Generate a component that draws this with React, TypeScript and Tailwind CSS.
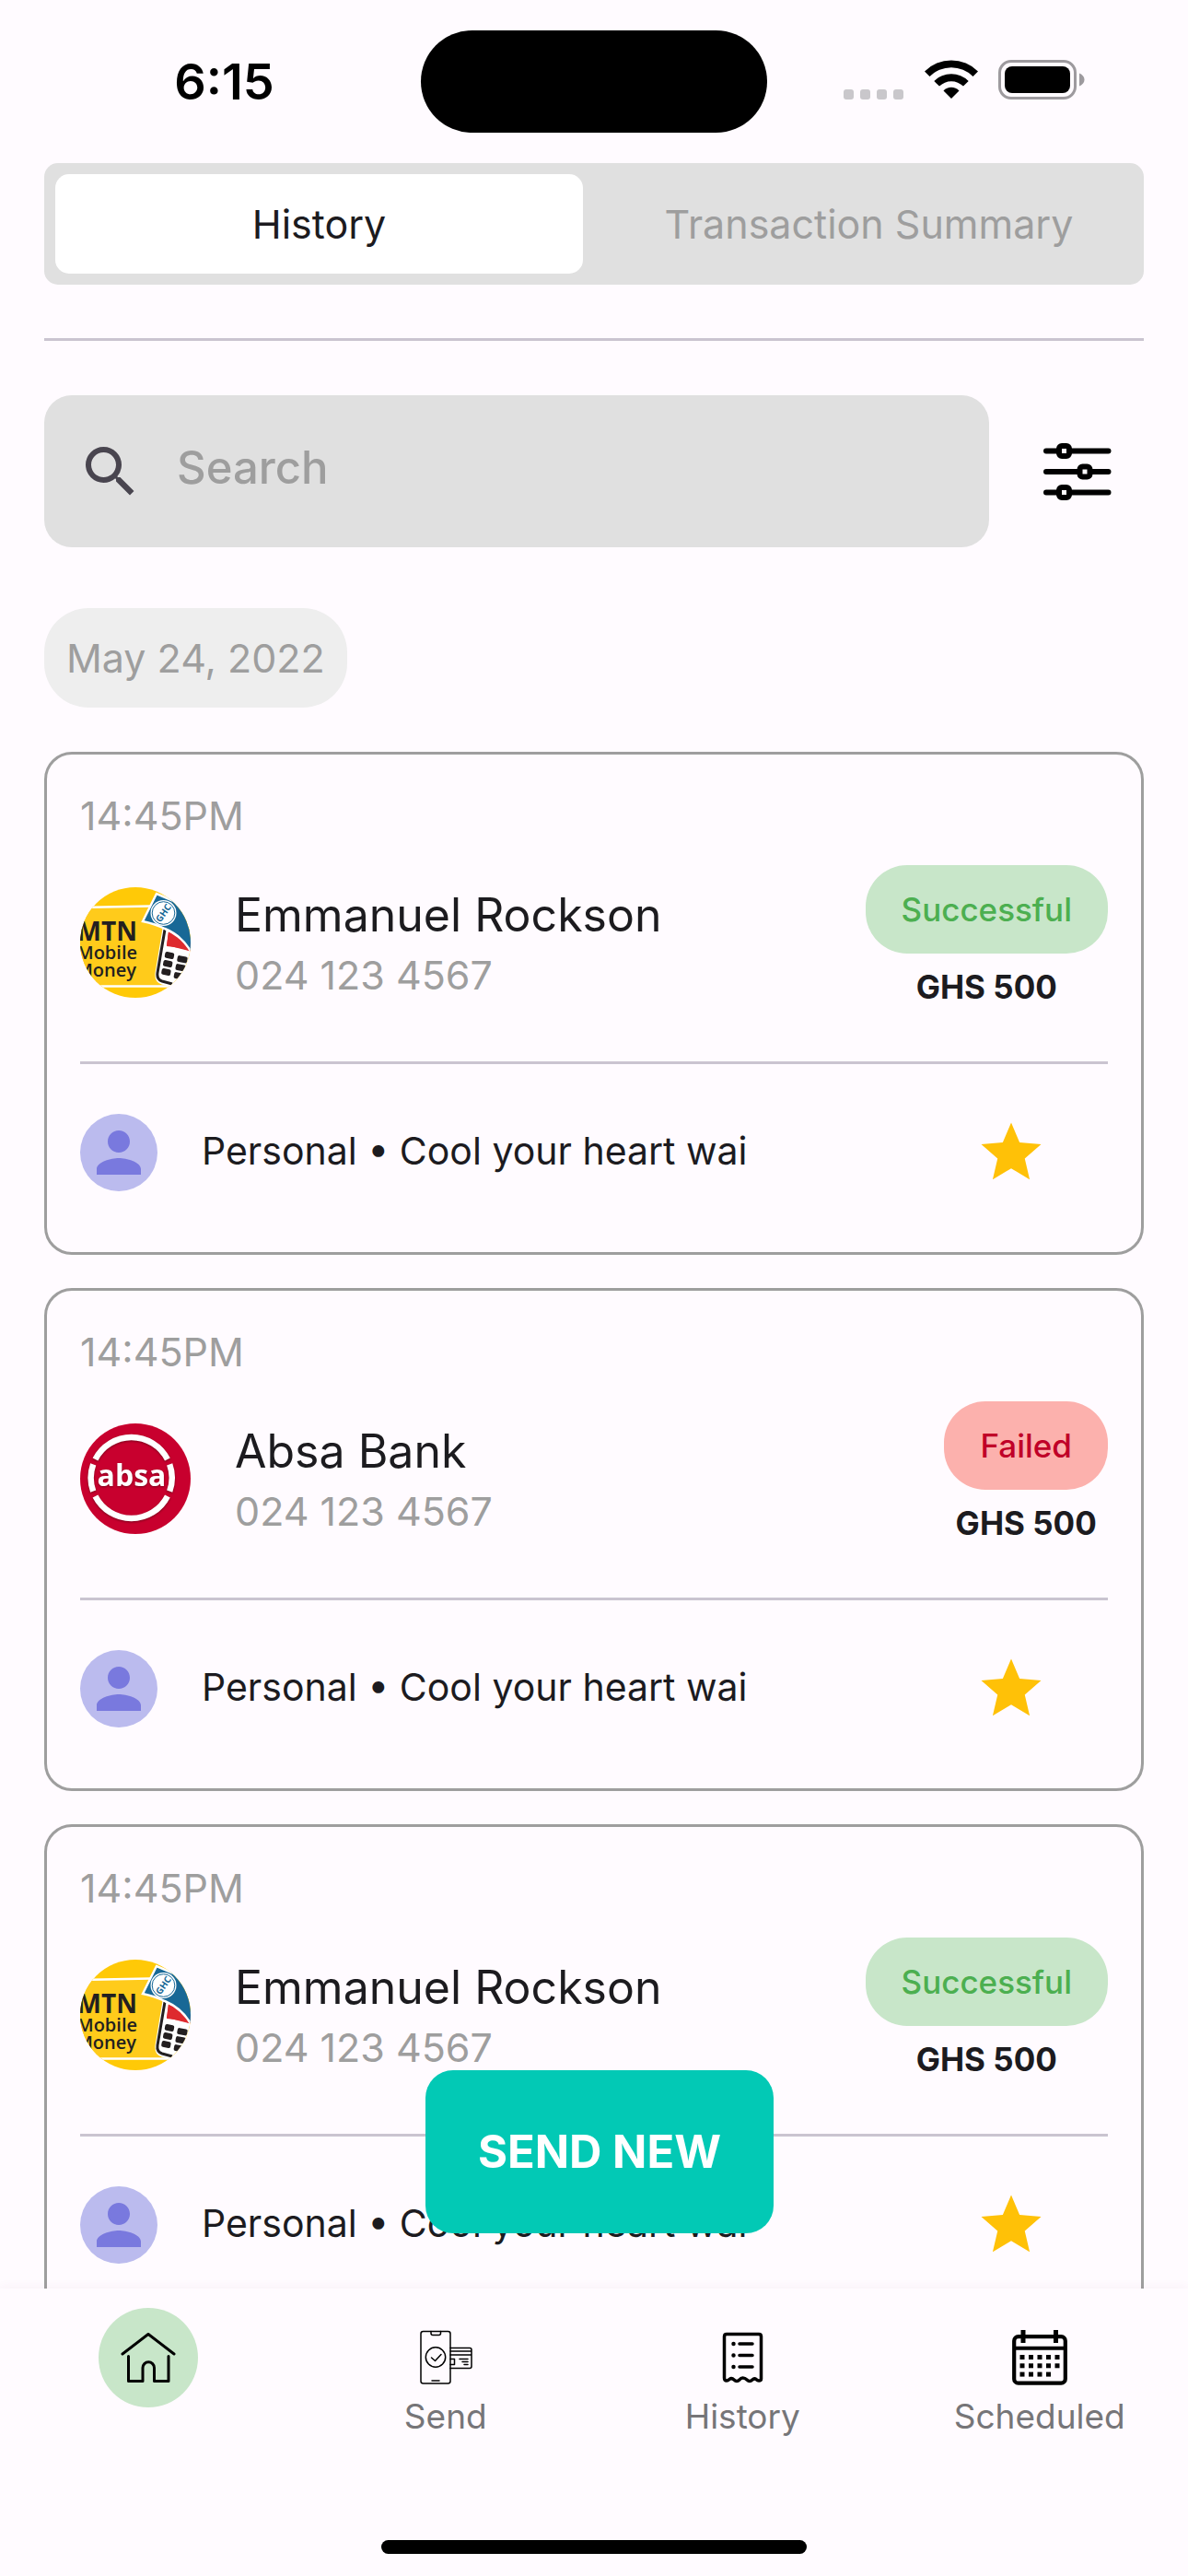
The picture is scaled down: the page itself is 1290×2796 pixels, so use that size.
import { useState } from "react";
import { MdPerson, MdSearch, MdStar } from "react-icons/md";

type Status = "Successful" | "Failed";
type Logo = "mtn" | "absa";

interface Transaction {
  id: number;
  time: string;
  name: string;
  phone: string;
  amount: string;
  status: Status;
  logo: Logo;
  note: string;
}

const transactions: Transaction[] = [
  { id: 1, time: "14:45PM", name: "Emmanuel Rockson", phone: "024 123 4567", amount: "GHS 500", status: "Successful", logo: "mtn", note: "Personal • Cool your heart wai" },
  { id: 2, time: "14:45PM", name: "Absa Bank", phone: "024 123 4567", amount: "GHS 500", status: "Failed", logo: "absa", note: "Personal • Cool your heart wai" },
  { id: 3, time: "14:45PM", name: "Emmanuel Rockson", phone: "024 123 4567", amount: "GHS 500", status: "Successful", logo: "mtn", note: "Personal • Cool your heart wai" },
];

function StatusBar() {
  return (
    <header className="grid shrink-0 grid-cols-[1fr_376px_1fr] items-center py-[33px]">
      <time className="pl-[30px] text-center text-[54px] leading-[60px] font-semibold text-black">6:15</time>
      <div className="h-[111px] rounded-full bg-black" />
      <div className="flex items-end justify-end pr-[111px]">
        <div className="mb-1 flex gap-[7px]">
          {[0, 1, 2, 3].map((n) => (
            <span key={n} className="size-[11px] rounded-[3px] bg-[#c9c7cb]" />
          ))}
        </div>
        <svg viewBox="0 0 58 43" className="mb-1 ml-[23px] h-[43px] w-[58px]" aria-label="Wi-Fi">
          <path d="M0 12.5A41 41 0 0 1 58 12.5L52.5 18A33.3 33.3 0 0 0 5.5 18Z" />
          <path d="M10.3 23A26.5 26.5 0 0 1 47.7 23L42 28.6A18.6 18.6 0 0 0 16 28.6Z" />
          <path d="M20.5 33.4A12 12 0 0 1 37.5 33.4L29 42Z" />
        </svg>
        <svg viewBox="0 0 95 43" className="mb-1 ml-[22px] h-[43px] w-[95px]" aria-label="Battery full">
          <rect x="1.5" y="1.5" width="82" height="40" rx="12.5" fill="none" stroke="#9d9a9e" strokeWidth="3" />
          <rect x="7" y="7" width="71" height="29" rx="8" />
          <path d="M88 14.5C91.5 16 93.5 18.500 93.500 21.500S91.500 27 88 28.500Z" fill="#9d9a9e" />
        </svg>
      </div>
    </header>
  );
}

function FilterIcon() {
  return (
    <svg viewBox="0 0 76 64" className="h-16 w-[76px]" aria-hidden="true">
      <path d="M3 9.500H70.500M3 32H70.500M3 54.500H70.500" stroke="#000" strokeWidth="6" strokeLinecap="round" />
      <g fill="#fffbff" stroke="#000" strokeWidth="6">
        <rect x="17" y="4" width="11" height="11" rx="3" />
        <rect x="39.500" y="26.500" width="11" height="11" rx="3" />
        <rect x="17" y="49" width="11" height="11" rx="3" />
      </g>
    </svg>
  );
}

function MtnLogo() {
  return (
    <svg viewBox="0 0 120 120" className="size-[120px] shrink-0 rounded-full" role="img" aria-label="MTN Mobile Money">
      <rect width="120" height="120" fill="#ffc907" />
      <rect y="21" width="120" height="87" fill="#ffcb1b" />
      <path d="M0 22L76 20.500M0 107.500H120" stroke="#fff" strokeWidth="2.500" />
      <g fill="#231f20" fontFamily="'Open Sans', sans-serif" textAnchor="end">
        <text x="62" y="58" fontSize="28" fontWeight="700">MTN</text>
        <text x="62" y="78" fontSize="20" fontWeight="600">Mobile</text>
        <text x="61" y="97" fontSize="20" fontWeight="600">Money</text>
      </g>
      <path d="M92 45L84 93Q83 101 89 103L101 106L124 96V62Z" fill="#fff" stroke="#fff" strokeWidth="5" />
      <path d="M92 46L84 93Q83 100 89 102L100 105" fill="none" stroke="#231f20" strokeWidth="3" />
      <path d="M96 48L122 70L94 63Z" fill="#de2a2e" />
      <path d="M96 48L94 64Q108 65 119 69L120 60Z" fill="#de2a2e" />
      <g fill="#231f20">
        {[0, 1, 2].map((row) => (
          <g key={row} transform={`translate(${97 - row * 1.8} ${74 + row * 9})`}>
            <rect x="-5" y="-3.500" width="10" height="7" rx="2" transform="rotate(11)" />
            <rect x="9" y="-2" width="11" height="7" rx="2" transform="rotate(11)" />
          </g>
        ))}
      </g>
      <path d="M83 7L68 37Q82 40 92 45Q111 53 121 71L124 20L104 16Z" fill="#186896" stroke="#fff" strokeWidth="2.500" />
      <circle cx="90.500" cy="28" r="14" fill="#fff" />
      <circle cx="90.500" cy="28" r="12.300" fill="none" stroke="#186896" strokeWidth="1" />
      <text x="90.500" y="31.500" fontSize="10" fontWeight="700" fill="#186896" textAnchor="middle" fontFamily="'Open Sans', sans-serif" transform="rotate(-55 90.500 28)">GHC</text>
    </svg>
  );
}

function AbsaLogo() {
  return (
    <svg viewBox="0 0 120 120" className="size-[120px] shrink-0 rounded-full" role="img" aria-label="Absa">
      <rect width="120" height="120" fill="#c8002e" />
      <g className="drop-shadow-[0_1px_1px_#7a001c]">
        <g fill="none" stroke="#fff" strokeWidth="6.500">
          <path d="M16.500 39A44 44 0 0 1 94.900 39M16.500 79A44 44 0 0 0 94.900 79" />
          <path d="M14.200 44.300A44 44 0 0 0 14.200 73.700M97.200 44.300A44 44 0 0 1 97.200 73.700" />
        </g>
        <text x="56" y="68" fill="#fff" fontFamily="'Open Sans', sans-serif" fontSize="32" fontWeight="700" textAnchor="middle">absa</text>
      </g>
    </svg>
  );
}

function TransactionCard({ item }: { item: Transaction }) {
  const [starred, setStarred] = useState(true);
  return (
    <li className="rounded-[30px] border-[3px] border-[#9e9e9e] px-9 pt-9 pb-[66px]">
      <p className="text-[43px] leading-[60px] text-[#9e9e9e]">{item.time}</p>
      <div className="mt-6 flex h-[168px] items-center">
        {item.logo === "mtn" ? <MtnLogo /> : <AbsaLogo />}
        <div className="ml-12 min-w-0 flex-1 pt-1">
          <h2 className="text-[50px] leading-[66px] text-[#1c1b1f]">{item.name}</h2>
          <p className="text-[43px] leading-[64px] text-[#9e9e9e]">{item.phone}</p>
        </div>
        <div className="flex flex-col items-center gap-3 self-start">
          <span
            className={
              item.status === "Successful"
                ? "rounded-[45px] bg-[#c8e6c9] px-[39px] py-6 text-[35px] leading-[48px] font-medium text-[#4caf50]"
                : "rounded-[45px] bg-[#fcb1ad] px-[39px] py-6 text-[35px] leading-[48px] font-medium text-[#c00028]"
            }
          >
            {item.status}
          </span>
          <span className="text-[35px] leading-[48px] font-bold text-[#1c1b1f]">{item.amount}</span>
        </div>
      </div>
      <hr className="mt-[45px] border-t-[3px] border-[#cac4d0]" />
      <div className="mt-[54px] flex h-[84px] items-center">
        <span className="flex size-[84px] shrink-0 items-center justify-center rounded-full bg-[#bbbbee]">
          <MdPerson className="size-[72px] text-[#7979de]" />
        </span>
        <p className="ml-12 flex-1 pb-1 text-[41px] leading-[54px] text-[#1c1b1f]">{item.note}</p>
        <button
          type="button"
          aria-label="Favourite"
          aria-pressed={starred}
          onClick={() => setStarred(!starred)}
          className={starred ? "mr-[66px] text-[#ffc107]" : "mr-[66px] text-[#cac4d0]"}
        >
          <MdStar className="size-[78px]" />
        </button>
      </div>
    </li>
  );
}

function HomeIcon() {
  return (
    <svg viewBox="0 0 60 60" className="size-[60px]" fill="none" stroke="#000" strokeWidth="3" strokeLinecap="round" strokeLinejoin="round" aria-hidden="true">
      <path d="M2 26L30 4.500L58 26" />
      <path d="M8.500 28.500V55.500H24V41A6.250 6.250 0 0 1 36.500 41V55.500H52V28.500" />
    </svg>
  );
}

function SendIcon() {
  return (
    <svg viewBox="0 0 60 60" className="size-[60px]" fill="none" stroke="#000" strokeWidth="1.500" strokeLinecap="round" strokeLinejoin="round" aria-hidden="true">
      <rect x="3" y="1.500" width="32" height="56.500" rx="2.500" />
      <path d="M14 1.500V3.500Q14 5.500 16 5.500H22.500Q24.500 5.500 24.500 3.500V1.500M15 55H23" />
      <circle cx="19" cy="29.500" r="10.700" />
      <path d="M14.500 30L18.500 33.500L25 26.500" />
      <path d="M35 19.500H56Q58 19.500 58 21.500V39.500Q58 41.500 56 41.500H35M35 23H58M35 27H58M35 31.500H39.500V37.500H35M45 31.500H54M48 34.500H54M50 37.500H54" />
    </svg>
  );
}

function HistoryIcon() {
  return (
    <svg viewBox="0 0 60 60" className="size-[60px]" fill="none" stroke="#000" strokeWidth="3.500" strokeLinecap="round" strokeLinejoin="round" aria-hidden="true">
      <path d="M13 4.500H48Q50.500 4.500 50.500 7V53Q50.500 55 48 55Q46.500 55 45 53.500Q43 52 41 54Q38 57 35 54Q33 52 30.500 52Q28.500 52 27 54Q24 57 21 54Q18.500 51.500 16 53.500Q14.500 55 13 55Q10.500 55 10.500 52V7Q10.500 4.500 13 4.500Z" />
      <path d="M27 15H41M27 27.500H41M27 40H41" />
      <path d="M20.500 15V15.100M20.500 27.500V27.600M20.500 40V40.100" strokeWidth="4.500" />
    </svg>
  );
}

function CalendarIcon() {
  const dots = [
    [11, 20.5, 30, 39.5, 49],
    [11, 20.5, 30, 39.5, 49],
    [11, 20.5, 30, 39.5],
  ];
  return (
    <svg viewBox="0 0 60 60" className="size-[60px]" aria-hidden="true">
      <rect x="2.200" y="7.200" width="55.600" height="50.500" rx="4.500" fill="none" stroke="#000" strokeWidth="4.200" />
      <path d="M2 19.700H58" stroke="#000" strokeWidth="4" />
      <path d="M12 0V14M47.500 0V14" stroke="#000" strokeWidth="5" />
      {dots.map((row, r) => row.map((x) => <rect key={`${r}-${x}`} x={x - 2.5} y={27 + r * 9.3} width="5" height="5" />))}
    </svg>
  );
}

const navItems = [
  { label: "Send", Icon: SendIcon },
  { label: "History", Icon: HistoryIcon },
  { label: "Scheduled", Icon: CalendarIcon },
];

export default function App() {
  const [tab, setTab] = useState("History");
  const tabClass = (name: string) =>
    name === tab
      ? "rounded-[15px] bg-white text-[43px] leading-[60px] text-[#1c1b1f]"
      : "rounded-[15px] text-[43px] leading-[60px] text-[#9e9e9e]";

  return (
    <div className="flex h-screen flex-col bg-[#fffbff] font-['Inter',sans-serif]">
      <StatusBar />
      <main className="relative flex min-h-0 flex-1 flex-col">
        <div className="flex-1 overflow-y-auto px-12 [scrollbar-width:none]">
          <div role="tablist" className="grid h-[132px] grid-cols-2 gap-6 rounded-[15px] bg-[#e0e0e0] p-3">
            {["History", "Transaction Summary"].map((name) => (
              <button key={name} type="button" role="tab" aria-selected={tab === name} onClick={() => setTab(name)} className={tabClass(name)}>
                {name}
              </button>
            ))}
          </div>
          <hr className="mt-[58px] border-t-[3px] border-[#cac4d0]" />
          <div className="mt-[59px] flex items-center">
            <label className="flex h-[165px] flex-1 items-center rounded-[30px] bg-[#e0e0e0] px-9">
              <MdSearch className="size-[72px] shrink-0 text-[#49454f]" aria-hidden="true" />
              <input
                type="search"
                aria-label="Search"
                placeholder="Search"
                className="ml-9 min-w-0 flex-1 bg-transparent pb-2 text-[49px] leading-[60px] font-medium text-[#1c1b1f] outline-none placeholder:text-[#9e9e9e]"
              />
            </label>
            <button type="button" aria-label="Filter" className="mr-[33px] ml-[59px]">
              <FilterIcon />
            </button>
          </div>
          <p className="mt-[66px] w-fit rounded-[48px] bg-[#eeeeee] px-6 py-6 text-[43px] leading-[60px] text-[#9e9e9e]">May 24, 2022</p>
          <ul className="mt-12 flex flex-col gap-9">
            {transactions.map((item) => (
              <TransactionCard key={item.id} item={item} />
            ))}
          </ul>
        </div>
        <div className="pointer-events-none absolute inset-x-0 bottom-[60px] flex justify-center pl-3">
          <button type="button" className="pointer-events-auto rounded-[30px] bg-[#02c9b5] px-[57px] py-[57px] text-[49px] leading-[63px] font-bold text-white">
            SEND NEW
          </button>
        </div>
      </main>
      <footer className="relative shrink-0 bg-[#fffbff] shadow-[0_-3px_9px_rgba(120,60,90,0.04)]">
        <nav className="grid h-[273px] grid-cols-4 items-start justify-items-center">
          <button type="button" aria-label="Home" className="mt-[21px] flex size-[108px] items-center justify-center rounded-full bg-[#c8e6c9]">
            <HomeIcon />
          </button>
          {navItems.map(({ label, Icon }) => (
            <button key={label} type="button" className="mt-[45px] flex flex-col items-center gap-2.5 text-[37px] leading-[48px] text-[#767578]">
              <Icon />
              {label}
            </button>
          ))}
        </nav>
        <div className="mx-auto mb-6 h-[15px] w-[462px] rounded-full bg-black" />
      </footer>
    </div>
  );
}
